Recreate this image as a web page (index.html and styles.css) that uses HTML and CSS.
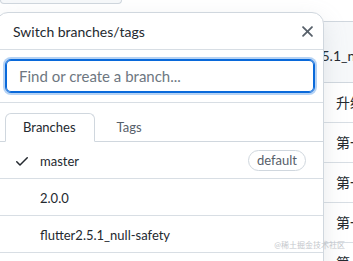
FILE: index.html
```html
<!DOCTYPE html>
<html>
  <head>
    <title>Switch branches</title>
    <link rel="stylesheet" href="styles.css">
  </head>
  <body>
    <!-- repo page behind the menu -->
    <div class="page">
      <div class="branch-btn"></div>
      <div class="files">
        <div class="files-head"><span>flutter2.5.1_null-safety</span></div>
        <div class="files-row">升级到 flutter 2.5.1</div>
        <div class="files-row">第一次提交</div>
        <div class="files-row">第一次提交</div>
        <div class="files-row">第一次提交</div>
        <div class="files-row">第一次提交</div>
      </div>
    </div>

    <!-- branch menu -->
    <div class="menu">
      <div class="menu-header">
        <span class="menu-title">Switch branches/tags</span>
        <svg class="close" width="19" height="19" viewBox="0 0 16 16">
          <path d="M3.72 3.72a.75.75 0 011.06 0L8 6.94l3.22-3.22a.75.75 0 111.06 1.06L9.06 8l3.22 3.22a.75.75 0 11-1.06 1.06L8 9.06l-3.22 3.22a.75.75 0 01-1.06-1.06L6.94 8 3.72 4.78a.75.75 0 010-1.06z"/>
        </svg>
      </div>
      <div class="menu-filter">
        <input class="filter-input" type="text" placeholder="Find or create a branch...">
      </div>
      <div class="menu-tabs">
        <div class="tab active">Branches</div>
        <div class="tab">Tags</div>
      </div>
      <div class="menu-list">
        <div class="item">
          <svg class="check" width="16" height="16" viewBox="0 0 16 16">
            <path d="M13.78 4.22a.75.75 0 010 1.06l-7.25 7.25a.75.75 0 01-1.06 0L2.22 9.28a.75.75 0 011.06-1.06L6 10.94l6.72-6.72a.75.75 0 011.06 0z"/>
          </svg>
          <span class="item-name">master</span>
          <span class="label">default</span>
        </div>
        <div class="item">
          <span class="check-space"></span>
          <span class="item-name">2.0.0</span>
        </div>
        <div class="item">
          <span class="check-space"></span>
          <span class="item-name">flutter2.5.1_null-safety</span>
        </div>
      </div>
    </div>

    <span class="mark">@稀土掘金技术社区</span>
  </body>
</html>
```

FILE: styles.css
```css
*{
    margin: 0;
    padding: 0;
    box-sizing: border-box;
}
body{
    width: 353px;
    height: 261px;
    overflow: hidden;
    position: relative;
    background: #fff;
    font-family: Lato, "Noto Sans CJK SC", sans-serif;
    font-size: 13px;
    color: #24292f;
}

/* background page */
.branch-btn{
    width: 122px;
    height: 4px;
    background: #f6f8fa;
    border: 1px solid #d0d7de;
    border-top: none;
    border-radius: 0 0 6px 6px;
}
.files{
    margin-top: 17px;
    margin-left: 240px;
    width: 200px;
    border: 1px solid #d0d7de;
    border-radius: 6px;
    font-size: 14px;
}
.files-head{
    height: 61px;
    background: #f6f8fa;
    border-bottom: 1px solid #d0d7de;
    padding: 25px 0 0 31px;
    white-space: nowrap;
}
.files-row{
    height: 40px;
    line-height: 40px;
    padding-left: 95px;
    border-bottom: 1px solid #d8dee4;
    white-space: nowrap;
}

/* menu */
.menu{
    position: absolute;
    top: 12px;
    left: -4px;
    width: 328px;
    height: 270px;
    background: #fff;
    border: 1px solid #d0d7de;
    border-radius: 12px;
    box-shadow: 0 8px 24px rgba(140, 149, 159, 0.2);
}
.menu-header{
    display: flex;
    align-items: center;
    justify-content: space-between;
    height: 37px;
    padding: 0 6px 0 16px;
    border-bottom: 1px solid #d8dee4;
}
.menu-title{
    font-size: 14px;
    padding-top: 1px;
}
.close{
    fill: #57606a;
}
.menu-filter{
    padding: 9px 8px;
    border-bottom: 1px solid #d8dee4;
}
.filter-input{
    display: block;
    width: 100%;
    height: 34px;
    padding: 0 13px;
    font-family: inherit;
    font-size: 15px;
    color: #24292f;
    border: 1px solid #0969da;
    border-radius: 6px;
    outline: none;
    box-shadow: inset 0 0 0 1px #0969da, 0 0 0 2px rgba(9, 105, 218, 0.3);
}
.filter-input::placeholder{
    color: #6e7781;
}
.menu-tabs{
    display: flex;
    gap: 4px;
    padding: 10px 8px 0;
    border-bottom: 1px solid #d0d7de;
}
.tab{
    padding: 4px 18px 5px 17px;
    margin-bottom: -1px;
    border: 1px solid transparent;
    border-radius: 6px 6px 0 0;
    color: #57606a;
    line-height: 18px;
}
.tab.active{
    color: #24292f;
    background: #fff;
    border-color: #d0d7de;
    border-bottom-color: #fff;
}
.item{
    display: flex;
    align-items: center;
    height: 37px;
    padding: 1px 17px 0 17px;
    border-bottom: 1px solid #d8dee4;
}
.check{
    fill: #24292f;
    margin-right: 10px;
}
.check-space{
    width: 16px;
    margin-right: 10px;
}
.item-name{
    flex: 1;
}
.label{
    padding: 0 8px;
    line-height: 19px;
    border: 1px solid #d0d7de;
    border-radius: 12px;
    color: #57606a;
    font-size: 13px;
}

.mark{
    position: absolute;
    right: 8px;
    bottom: 11px;
    font-size: 8px;
    color: #c4c7cc;
}
```
